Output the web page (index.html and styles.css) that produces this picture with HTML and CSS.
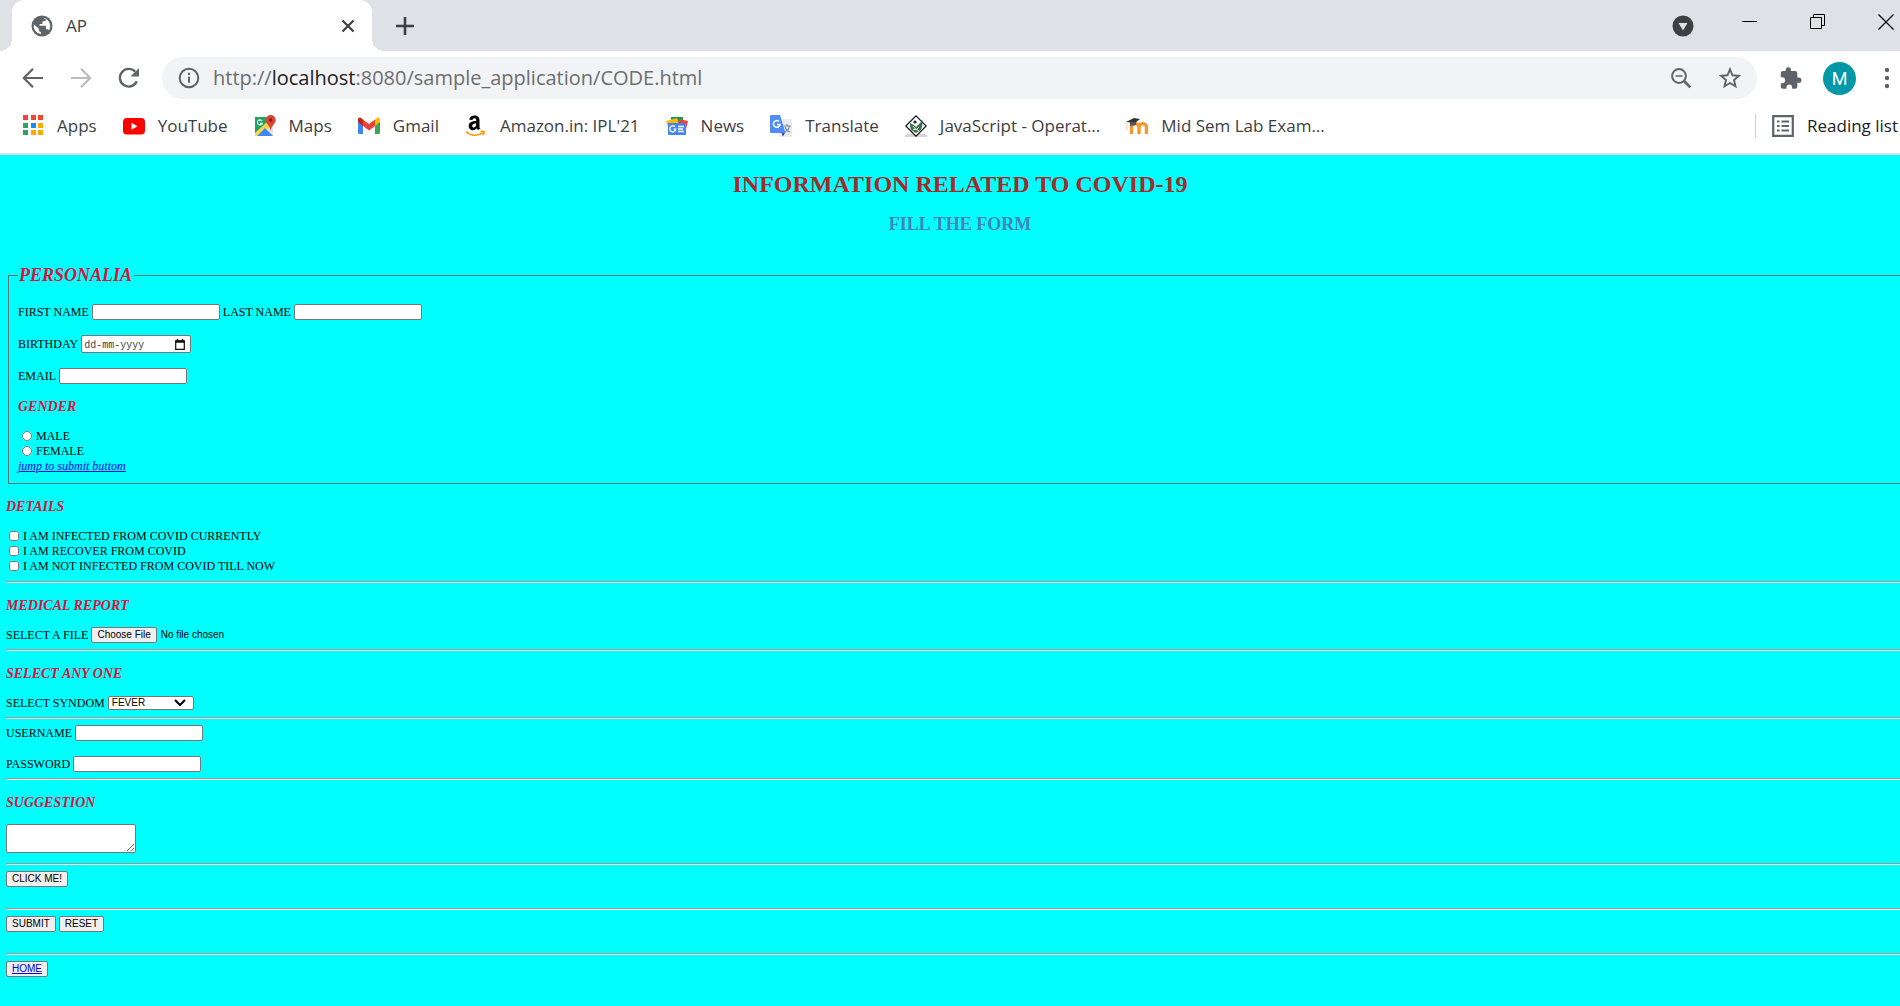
FILE: index.html
```html
<!DOCTYPE html>
<html lang="en">
<head>
<meta charset="utf-8">
<title>AP</title>
<link rel="stylesheet" href="styles.css">
</head>
<body>
<header class="browser">
  <div class="tab-strip">
    <div class="tab">
      <svg class="icon-22" viewBox="0 0 22 22"><circle cx="11" cy="11" r="10.5" fill="#5f6368"/><path d="M2.800 9.300L8 13.800v1.500c0 1 .8 1.700 1.900 1.700v2.100A8.300 8.300 0 0 1 2.800 9.300zM11.800 2.800c3.900.4 7.400 3.900 7.400 8.200 0 1.600-.5 3.200-1.300 4.500-.3-.8-1-1.300-1.900-1.300h-1v-2.500c0-.6-.4-1-1-1H8.500V8.900h2c.6 0 1-.4 1-1V6.200h1.700c1 0 1.800-.8 1.800-1.700l-3.200-1.700z" fill="#fff"/></svg>
      <span class="tab-title">AP</span>
      <button class="icon-button" aria-label="Close tab"><svg class="icon-14" viewBox="0 0 14 14"><path d="M1.500 1.500l11 11M12.500 1.500l-11 11" stroke="#3c4043" stroke-width="2.200"/></svg></button>
    </div>
    <button class="icon-button new-tab" aria-label="New tab"><svg class="icon-18" viewBox="0 0 18 18"><path d="M9 0v18M0 9h18" stroke="#3c4043" stroke-width="2.600"/></svg></button>
    <div class="window-controls">
      <button class="icon-button tab-search" aria-label="Search tabs"><svg class="icon-22" viewBox="0 0 22 22"><circle cx="11" cy="11" r="10.500" fill="#3c4043"/><path d="M6.500 8h9L11 15.500z" fill="#dee1e6"/></svg></button>
      <button class="icon-button" aria-label="Minimize"><svg class="icon-16" viewBox="0 0 16 16"><path d="M0 7.500h15" stroke="#000"/></svg></button>
      <button class="icon-button" aria-label="Restore"><svg class="icon-16" viewBox="0 0 16 16"><path d="M.5 3.500h11v11H.5zM3.500 3.500v-3h11v11h-3" fill="none" stroke="#000"/></svg></button>
      <button class="icon-button" aria-label="Close window"><svg class="icon-16" viewBox="0 0 16 16"><path d="M.5.5l15 15M15.500.5l-15 15" stroke="#000" stroke-width="1.200"/></svg></button>
    </div>
  </div>

  <div class="toolbar">
    <button class="icon-button" aria-label="Back"><svg class="icon-22" viewBox="0 0 22 22"><path d="M21 11H2.500M11 1.800L1.800 11l9.200 9.200" fill="none" stroke="#5f6368" stroke-width="2.200"/></svg></button>
    <button class="icon-button" aria-label="Forward"><svg class="icon-22" viewBox="0 0 22 22"><path d="M1 11h18.500M11 1.800l9.200 9.200-9.200 9.200" fill="none" stroke="#babcbe" stroke-width="2.200"/></svg></button>
    <button class="icon-button" aria-label="Reload"><svg class="icon-22" viewBox="0 0 22 22"><path d="M18.800 14.200A8.800 8.800 0 1 1 17.200 4.800" fill="none" stroke="#5f6368" stroke-width="2.300"/><path d="M21 1v8.500h-8.500z" fill="#5f6368"/></svg></button>
    <div class="address">
      <svg class="icon-22" viewBox="0 0 22 22"><circle cx="11" cy="11" r="9.300" fill="none" stroke="#5f6368" stroke-width="2"/><path d="M11 9.800v6M11 5.800v2.200" stroke="#5f6368" stroke-width="2"/></svg>
      <span class="url">http://<span class="host">localhost</span>:8080/sample_application/CODE.html</span>
      <button class="icon-button" aria-label="Zoom out"><svg class="icon-22" viewBox="0 0 22 22"><circle cx="9" cy="9" r="6.900" fill="none" stroke="#5f6368" stroke-width="2"/><path d="M5.500 9h7" stroke="#5f6368" stroke-width="1.500"/><path d="M14 14l6.300 6.300" stroke="#5f6368" stroke-width="2.600"/></svg></button>
      <button class="icon-button" aria-label="Bookmark this page"><svg class="icon-22" viewBox="0 0 22 22"><path d="M11 2.300l2.500 6 6.400.5-4.900 4.200 1.500 6.300L11 16l-5.500 3.300L7 13 2.100 8.800l6.400-.5z" fill="none" stroke="#5f6368" stroke-width="1.900"/></svg></button>
    </div>
    <button class="icon-button" aria-label="Extensions"><svg class="icon-22" viewBox="0 0 22 22"><path d="M18.800 10.500h-1.500V6c0-1.100-.9-2-2-2h-4.400V2.800a2.600 2.600 0 0 0-5.200 0V4H2.800c-1.100 0-2 .9-2 2v4.200h1.400a3 3 0 0 1 0 6H.8v3.600c0 1.100.9 2 2 2h3.700v-1.400a2.800 2.800 0 0 1 5.600 0v1.400h3.200c1.100 0 2-.9 2-2v-4h1.500a2.650 2.650 0 0 0 0-5.300z" fill="#5f6368"/></svg></button>
    <button class="avatar" aria-label="Profile">M</button>
    <button class="icon-button" aria-label="Menu"><svg class="icon-22" viewBox="0 0 22 22"><g fill="#5f6368"><circle cx="11" cy="3" r="2.200"/><circle cx="11" cy="11" r="2.200"/><circle cx="11" cy="19" r="2.200"/></g></svg></button>
  </div>

  <nav class="bookmarks">
    <a class="bookmark" href="#apps"><svg class="icon-22" viewBox="0 0 22 22"><path d="M1 0h5v5H1zM9 0h5v5H9zM16 0h5v5h-5z" fill="#f44336"/><path d="M1 8h5v5H1zM1 15h5v5H1z" fill="#2da55b"/><path d="M9 8h5v5H9z" fill="#1e88f5"/><path d="M16 8h5v5h-5zM9 15h5v5H9zM16 15h5v5h-5z" fill="#f9ab00"/></svg>Apps</a>
    <a class="bookmark" href="#youtube"><svg class="icon-22" viewBox="0 0 22 22"><rect y="3" width="22" height="16.500" rx="4" fill="red"/><path d="M8.500 7.700v7l6-3.500z" fill="#fff"/></svg>YouTube</a>
    <a class="bookmark" href="#maps"><svg class="icon-22" viewBox="0 0 22 22"><path d="M1 2h18v19H1z" fill="#e2e2e2"/><path d="M1 2h12l3 6L1 21z" fill="#1fa463"/><path d="M1 18L13 7l4 4L5 21H1z" fill="#ffd54a"/><path d="M3 21l8-8 8 8z" fill="#4285f4"/><path d="M8 6a2.500 2.500 0 1 0 .3 2.200H6" fill="none" stroke="#fff" stroke-width="1.100"/><path d="M16.700 0a5 5 0 0 0-5 5c0 4 4 5 5 10.500C17.700 10 21.700 9 21.700 5a5 5 0 0 0-5-5z" fill="#db4437"/><circle cx="16.700" cy="5" r="1.700" fill="#7b231b"/></svg>Maps</a>
    <a class="bookmark" href="#gmail"><svg class="icon-22" viewBox="0 0 22 22"><path d="M0 6l5 3.700V19H1.500A1.500 1.500 0 0 1 0 17.500z" fill="#4285f4"/><path d="M22 6l-5 3.700V19h3.500a1.500 1.500 0 0 0 1.500-1.500z" fill="#34a853"/><path d="M17 4.500L19 3c1.400-1 3 .1 3 1.800V7l-5 4z" fill="#fbbc04"/><path d="M5 4.500L3 3C1.600 2 0 3.100 0 4.800V7l5 4z" fill="#c5221f"/><path d="M5 4.500L11 9l6-4.500V11l-6 4.500L5 11z" fill="#ea4335"/></svg>Gmail</a>
    <a class="bookmark" href="#amazon"><svg class="icon-22" viewBox="0 0 22 22"><path d="M14.500 12.700V5.200C14.500 2 12.500.5 9.800.5 6.600.5 4.600 2 4.200 4.700l3.300.4c.2-1.200.9-1.800 2-1.800 1.300 0 1.700.7 1.700 2v.8C7.500 6.200 3.700 7.100 3.700 11c0 2.600 1.700 4.200 4 4.200 1.800 0 3-.7 4-2 .4.700.8 1.200 1.500 1.900l2.400-2.200zM11.200 8.600c0 2.500-1 4-2.500 4-1 0-1.500-.7-1.500-1.800 0-2 1.800-2.400 4-2.400z" fill="#000"/><path d="M1 16.500c5 4.800 12 4.800 17 1.200M15.500 16.600c1.500-.4 3-.5 3.600 0 .3.800-.3 2.200-1.300 3.500" fill="none" stroke="#ff9900" stroke-width="1.600"/></svg>Amazon.in: IPL'21</a>
    <a class="bookmark" href="#news"><svg class="icon-22" viewBox="0 0 22 22"><path d="M5 2h12v7H5z" fill="#0f9d58"/><path d="M0 6l11-3 3 8L3 15z" fill="#fbbc04"/><path d="M13 4l9 2-3 12-8-4z" fill="#ea4335"/><path d="M2 8h18v11a1 1 0 0 1-1 1H3a1 1 0 0 1-1-1z" fill="#4285f4"/><path d="M9 11.700a3 3 0 1 0 .8 2.500H7.500" fill="none" stroke="#fff" stroke-width="1.300"/><path d="M12 11.500h6M12 14h5M12 16.500h6" stroke="#fff" stroke-width="1.300"/></svg>News</a>
    <a class="bookmark" href="#translate"><svg class="icon-22" viewBox="0 0 22 22"><rect x="9" y="4" width="13" height="18" rx="1" fill="#e8eaed"/><path d="M13 11h8M17 9v2M19.500 11c-.5 3-2.500 5-5 6M15 12c1 2.500 3 4.500 5 5" stroke="#78909c" stroke-width="1.200" fill="none"/><path d="M11 17h4.500L13 21.500z" fill="#3949ab"/><path d="M1 0h9l5.500 18H1a1 1 0 0 1-1-1V1a1 1 0 0 1 1-1z" fill="#4f8df5"/><path d="M9 6.500a3.300 3.300 0 1 0 1 3H7" fill="none" stroke="#fff" stroke-width="1.500"/></svg>Translate</a>
    <a class="bookmark" href="#javascript"><svg class="icon-22" viewBox="0 0 22 22"><path d="M0 20c3-2 19-2 22 0v2H0z" fill="#d5d5d5"/><path d="M11 .8L21.200 11 11 21.200.8 11z" fill="#fff" stroke="#111" stroke-width="1.200"/><path d="M5 8l4 2 2 2 2-2 5-5-1 7-1 3-5 3-5-3-1-4z" fill="#3d7350"/><circle cx="10" cy="7" r="1.600" fill="#222"/><path d="M8 11l3 4 3-3M8 15l3-1 3 2" fill="none" stroke="#dcebe0"/></svg>JavaScript - Operat...</a>
    <a class="bookmark" href="#exam"><svg class="icon-22" viewBox="0 0 22 22"><path d="M5.500 19v-7c0-4.500 7.500-4.500 7.500 0v7-7c0-4.500 7.500-4.500 7.500 0v7" fill="none" stroke="#f8972d" stroke-width="3.400"/><path d="M0 7l8-4 6 1-5 4z" fill="#333"/><path d="M4 7l6 0v3l-6 1z" fill="#555"/><path d="M1 8v7" stroke="#f5c9a8"/></svg>Mid Sem Lab Exam...</a>
    <a class="bookmark reading-list" href="#reading"><svg class="icon-22" viewBox="0 0 22 22"><path d="M1.200 1.200h19.600v19.600H1.200z" fill="none" stroke="#5f6368" stroke-width="2.200"/><path d="M5 6.500h2.500M5 11h2.500M5 15.500h2.500M9.500 6.500H17M9.500 11H17M9.500 15.500H17" stroke="#5f6368" stroke-width="2.200"/></svg>Reading list</a>
  </nav>
</header>

<main class="page">
  <h1 class="title">INFORMATION RELATED TO COVID-19</h1>
  <h2 class="subtitle">FILL THE FORM</h2>
  <form class="form" action="#">
    <fieldset class="personalia">
      <legend class="legend">PERSONALIA</legend>
      <div class="row">
        <label for="first">FIRST NAME</label><input class="field" id="first" type="text">
        <label for="last">LAST NAME</label><input class="field" id="last" type="text">
      </div>
      <div class="row">
        <label for="birthday">BIRTHDAY</label>
        <div class="date-box">
          <input class="date" id="birthday" type="text" placeholder="dd-mm-yyyy">
          <svg class="calendar" viewBox="0 0 10 11"><path d="M.7 2h8.600v8.300H.7z" fill="none" stroke="#111" stroke-width="1.200"/><path d="M.3 1.300h9.400v2.400H.3zM1.800 0h1.500v2H1.800zM6.700 0h1.500v2H6.700z" fill="#111"/></svg>
        </div>
      </div>
      <div class="row">
        <label for="email">EMAIL</label><input class="field" id="email" type="email">
      </div>
      <h3 class="heading">GENDER</h3>
      <div class="option"><input class="tick radio" type="radio" name="gender" id="male"><label for="male">MALE</label></div>
      <div class="option"><input class="tick radio" type="radio" name="gender" id="female"><label for="female">FEMALE</label></div>
      <a class="jump" href="#submit">jump to submit buttom</a>
    </fieldset>

    <h3 class="heading">DETAILS</h3>
    <div class="option"><input class="tick" type="checkbox" id="infected"><label for="infected">I AM INFECTED FROM COVID CURRENTLY</label></div>
    <div class="option"><input class="tick" type="checkbox" id="recover"><label for="recover">I AM RECOVER FROM COVID</label></div>
    <div class="option"><input class="tick" type="checkbox" id="never"><label for="never">I AM NOT INFECTED FROM COVID TILL NOW</label></div>
    <hr class="rule">

    <h3 class="heading">MEDICAL REPORT</h3>
    <div class="row"><label for="report">SELECT A FILE</label><input class="file" id="report" type="file"></div>
    <hr class="rule">

    <h3 class="heading">SELECT ANY ONE</h3>
    <div class="row">
      <label for="symptom">SELECT SYNDOM</label>
      <div class="select-box">
        <select class="select" id="symptom"><option>FEVER</option></select>
        <svg class="arrow" viewBox="0 0 12 8"><path d="M1 1l5 5 5-5" fill="none" stroke="#000" stroke-width="2"/></svg>
      </div>
    </div>
    <hr class="rule">

    <div class="row"><label for="user">USERNAME</label><input class="field" id="user" type="text"></div>
    <div class="row"><label for="pass">PASSWORD</label><input class="field" id="pass" type="password"></div>
    <hr class="rule">

    <h3 class="heading">SUGGESTION</h3>
    <textarea class="suggestion" aria-label="Suggestion"></textarea>
    <hr class="rule">

    <div class="row actions"><button class="button" type="button">CLICK ME!</button></div>
    <hr class="rule">
    <div class="row actions"><button class="button" id="submit" type="submit">SUBMIT</button><button class="button" type="reset">RESET</button></div>
    <hr class="rule">
    <div class="row"><button class="button home" type="button">HOME</button></div>
  </form>
</main>
</body>
</html>
```
FILE: styles.css
```css
* { box-sizing: border-box; }
html { background: #0ff; }
body {
  margin: 0;
  overflow: hidden;
  font: 12px/16px "Liberation Serif", "Times New Roman", serif;
  color: #000;
}
svg { display: block; flex: none; }
.icon-22 { width: 22px; height: 22px; }
.icon-18 { width: 18px; height: 18px; }
.icon-16 { width: 16px; height: 16px; }
.icon-14 { width: 14px; height: 14px; }
.icon-button { padding: 0; border: 0; background: none; flex: none; }

/* Browser window */
.browser {
  background: #fff;
  border-bottom: 2px solid #dadce0;
  font-family: "Open Sans", "Noto Sans", sans-serif;
}
.tab-strip {
  display: flex;
  align-items: center;
  height: 51px;
  padding: 0 6px 0 12px;
  background: #dee1e6;
}
.tab {
  position: relative;
  display: flex;
  align-items: center;
  gap: 13px;
  width: 360px;
  height: 51px;
  padding: 0 17px 0 19px;
  background: #fff;
  border-radius: 12px 12px 0 0;
}
.tab::before,
.tab::after {
  content: "";
  position: absolute;
  bottom: 0;
  width: 12px;
  height: 12px;
}
.tab::before { right: 100%; background: radial-gradient(circle at 0 0, #dee1e6 12px, #fff 12px); }
.tab::after { left: 100%; background: radial-gradient(circle at 100% 0, #dee1e6 12px, #fff 12px); }
.tab-title { flex: 1; font-size: 17px; line-height: 24px; color: #3c4043; }
.new-tab { margin-left: 24px; }
.window-controls {
  display: flex;
  align-items: center;
  align-self: flex-start;
  gap: 52px;
  height: 44px;
  margin-left: auto;
}
.tab-search { margin: 8px -4px 0 0; }

.toolbar {
  display: flex;
  align-items: center;
  gap: 26px;
  height: 54px;
  padding: 0 2px 0 22px;
}
.address {
  flex: 1;
  display: flex;
  align-items: center;
  gap: 27px;
  height: 42px;
  margin: 0 -3px 0 -4px;
  padding: 0 16px;
  border-radius: 21px;
  background: #f1f3f4;
}
.url { flex: 1; margin-left: -14px; font-size: 20px; line-height: 28px; color: #6b6e72; }
.host { color: #202124; }
.avatar {
  width: 33px;
  height: 33px;
  margin: 0 -6px 0 -5px;
  padding: 0;
  border: 0;
  border-radius: 50%;
  background: #0097a7;
  color: #fff;
  font: 18px/33px Roboto, sans-serif;
}
.bookmarks {
  display: flex;
  align-items: center;
  gap: 26px;
  height: 48px;
  padding: 0 2px 6px 22px;
}
.bookmark {
  display: flex;
  align-items: center;
  gap: 13px;
  white-space: nowrap;
  font-size: 17px;
  line-height: 24px;
  color: #3c4043;
  text-decoration: none;
}
.reading-list { margin-left: auto; padding-left: 16px; border-left: 1px solid #cfd1d4; color: #202124; }

/* Form page, wider than the window */
.page { margin: 0 -14px 0 6px; padding: 14px 0 30px; }
.title,
.subtitle { margin: 0; text-align: center; }
.title { font-size: 24px; line-height: 30px; color: brown; }
.subtitle { margin: 14px 0 29px; font-size: 18px; line-height: 22px; color: steelblue; }
.personalia {
  min-width: 0;
  margin: 0 2px;
  padding: 18px 9px 9px;
  border: 1px solid #5f7676;
}
.legend {
  padding: 0 2px 0 1px;
  font: italic bold 18px/22px "Liberation Serif", serif;
  color: crimson;
}
.row { display: flex; align-items: center; gap: 3px; height: 16px; }
.row + .row { margin-top: 15px; }
.personalia .row + .row { margin-top: 16px; }
.field {
  width: 128px;
  height: 16px;
  padding: 0 2px;
  border: 1px solid #767676;
  border-radius: 2px;
  background: #fff;
}
.date-box {
  display: flex;
  align-items: center;
  width: 110px;
  height: 18px;
  padding: 0 5px 0 2px;
  border: 1px solid #767676;
  border-radius: 2px;
  background: #fff;
}
.date {
  flex: 1;
  min-width: 0;
  height: 16px;
  padding: 2px 0 0;
  border: 0;
  outline: 0;
  background: none;
  font: 10px/14px "Liberation Mono", monospace;
}
.date::placeholder { color: #444; }
.calendar { width: 10px; height: 11px; }
.heading {
  margin: 14px 0 12px;
  font: italic bold 14px/18px "Liberation Serif", serif;
  color: crimson;
}
.option { display: flex; align-items: center; gap: 4px; height: 15px; }
.tick { width: 10px; height: 10px; margin: 0 0 0 3px; }
.radio { margin-left: 4px; }
.jump { display: block; width: max-content; font-style: italic; color: #00e; }
.rule {
  margin: 6px 0;
  border: 1px solid;
  border-color: #9a9a9a #eee #eee #9a9a9a;
}
.option + .rule { margin-top: 8px; }
.file { height: 16px; font: 10px/14px "Liberation Sans", sans-serif; }
.file::file-selector-button,
.button {
  height: 16px;
  padding: 0 5px;
  border: 1px solid #767676;
  border-radius: 2px;
  background: #efefef;
  color: #000;
  font: 10px/14px "Liberation Sans", sans-serif;
}
.select-box { position: relative; }
.select {
  display: block;
  width: 86px;
  height: 14px;
  padding: 0 3px;
  border: 1px solid #767676;
  border-radius: 2px;
  background: #fff;
  color: #000;
  appearance: none;
  font: 10px/12px "Liberation Sans", sans-serif;
}
.arrow { position: absolute; top: 3px; right: 8px; width: 12px; height: 8px; pointer-events: none; }
.suggestion {
  display: block;
  width: 130px;
  height: 29px;
  margin: 0 0 10px;
  border: 1px solid #767676;
  border-radius: 2px;
  background: #fff;
}
.actions { margin-bottom: 21px; }
.home { color: #00e; text-decoration: underline; }
```
